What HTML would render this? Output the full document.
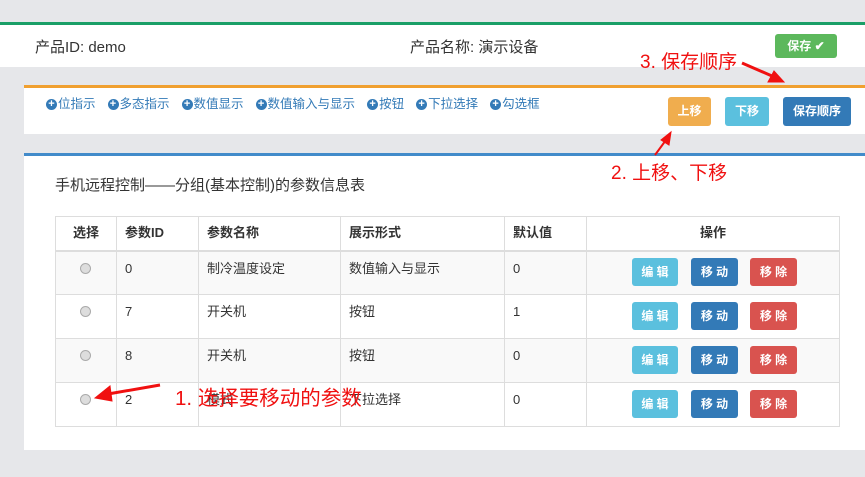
<!DOCTYPE html>
<html><head><meta charset="utf-8"><style>
*{margin:0;padding:0;box-sizing:border-box}
body{width:865px;height:477px;background:#e6e7ea;position:relative;overflow:hidden;font-family:"Liberation Sans","Noto Sans CJK SC",sans-serif;color:#333;font-size:13px}
.abs{position:absolute}
.btn{position:absolute;color:#fff;border-radius:3px;font-size:12px;text-align:center;font-weight:bold}
table{border-collapse:collapse;position:absolute;left:55px;top:216px;width:785px;font-size:13px}
td,th{border:1px solid #ddd;padding:0 8px;vertical-align:top;text-align:left;line-height:16px}
th{height:34px;vertical-align:middle;font-weight:bold;border-bottom:2px solid #ddd}
td{height:44px;padding-top:9px}
tr.s td{background:#f9f9f9}
.r{display:inline-block;width:11px;height:11px;border-radius:50%;border:1px solid #aaa;background:#ddd;margin-left:16px;margin-top:2px}
.red{color:#f01010;position:absolute;font-size:19px}
.links{display:flex;align-items:center}
.lk{margin-right:12px;display:inline-flex;align-items:center;line-height:16px}
.ic{display:inline-block;width:11px;height:11px;border-radius:50%;background:#337ab7;color:#fff;font-size:11px;line-height:11px;text-align:center;font-weight:bold;margin-right:1px;font-family:"Liberation Sans",sans-serif}
</style></head><body>
<div class="abs" style="left:0;top:22px;width:865px;height:3px;background:#1a9f67"></div>
<div class="abs" style="left:0;top:25px;width:865px;height:42px;background:#fff"></div>
<div class="abs" style="left:35px;top:36px;font-size:15px">产品ID: demo</div>
<div class="abs" style="left:410px;top:36px;font-size:15px">产品名称: 演示设备</div>
<div class="btn" style="left:775px;top:34px;width:62px;height:24px;line-height:24px;background:#5cb85c">保存 ✔</div>

<div class="abs" style="left:24px;top:85px;width:841px;height:49px;background:#fff;border-top:3px solid #f0a030"></div>
<div class="abs links" style="left:46px;top:96px;font-size:12.5px;color:#337ab7;white-space:nowrap">
<span class="lk"><span class="ic">+</span>位指示</span><span class="lk"><span class="ic">+</span>多态指示</span><span class="lk"><span class="ic">+</span>数值显示</span><span class="lk"><span class="ic">+</span>数值输入与显示</span><span class="lk"><span class="ic">+</span>按钮</span><span class="lk"><span class="ic">+</span>下拉选择</span><span class="lk"><span class="ic">+</span>勾选框</span></div>
<div class="btn" style="left:668px;top:97px;width:43px;height:29px;line-height:29px;background:#f0ad4e">上移</div>
<div class="btn" style="left:725px;top:97px;width:44px;height:29px;line-height:29px;background:#5bc0de">下移</div>
<div class="btn" style="left:783px;top:97px;width:68px;height:29px;line-height:29px;background:#337ab7">保存顺序</div>

<div class="abs" style="left:24px;top:153px;width:841px;height:297px;background:#fff;border-top:3px solid #428bca"></div>
<div class="abs" style="left:55px;top:174px;font-size:15px">手机远程控制——分组(基本控制)的参数信息表</div>

<table>
<tr><th style="width:61px;text-align:center">选择</th><th style="width:82px">参数ID</th><th style="width:142px">参数名称</th><th style="width:164px">展示形式</th><th style="width:82px">默认值</th><th style="text-align:center">操作</th></tr>
<tr class="s"><td><span class="r"></span></td><td>0</td><td>制冷温度设定</td><td>数值输入与显示</td><td>0</td><td></td></tr>
<tr><td><span class="r"></span></td><td>7</td><td>开关机</td><td>按钮</td><td>1</td><td></td></tr>
<tr class="s"><td><span class="r"></span></td><td>8</td><td>开关机</td><td>按钮</td><td>0</td><td></td></tr>
<tr><td><span class="r"></span></td><td>2</td><td>模式</td><td>下拉选择</td><td>0</td><td></td></tr>
</table>

<div id="ops"></div>
<script>
var ys=[258,302,346,390],h='';
ys.forEach(function(y){
h+='<div class="btn" style="left:632px;top:'+y+'px;width:46px;height:28px;line-height:28px;background:#5bc0de">编 辑</div>';
h+='<div class="btn" style="left:691px;top:'+y+'px;width:47px;height:28px;line-height:28px;background:#337ab7">移 动</div>';
h+='<div class="btn" style="left:750px;top:'+y+'px;width:47px;height:28px;line-height:28px;background:#d9534f">移 除</div>';
});
document.getElementById('ops').innerHTML=h;
</script>

<div class="red" style="left:640px;top:47px">3. 保存顺序</div>
<div class="red" style="left:611px;top:158px">2. 上移、下移</div>
<div class="red" style="left:175px;top:381px;font-size:20.5px">1. 选择要移动的参数</div>
<svg class="abs" style="left:0;top:0" width="865" height="477">
<g fill="#f01010" stroke="#f01010">
<line x1="742" y1="63" x2="772" y2="76" stroke-width="3"/>
<polygon points="784,82 768,82 774,71" />
<line x1="655" y1="155" x2="666" y2="140" stroke-width="2"/>
<polygon points="671,132 669,145 661,140"/>
<line x1="160" y1="385" x2="108" y2="394" stroke-width="3"/>
<polygon points="95,398 110,386 112,401"/>
</g>
</svg>
</body></html>
